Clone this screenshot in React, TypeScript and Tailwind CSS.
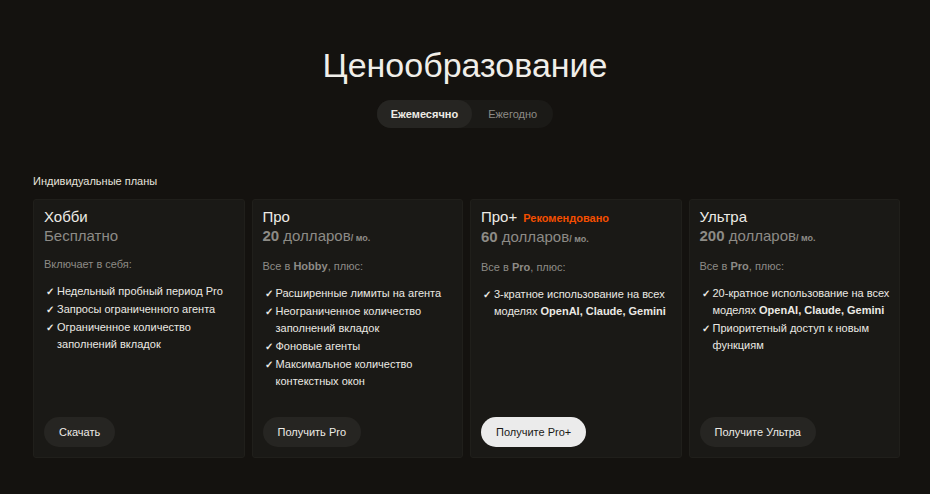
import React from "react";

type Plan = {
  name: string;
  badge?: string;
  price: React.ReactNode;
  intro: React.ReactNode;
  features: React.ReactNode[];
  cta: string;
  primary?: boolean;
};

const plans: Plan[] = [
  {
    name: "Хобби",
    price: <span>Бесплатно</span>,
    intro: "Включает в себя:",
    features: [
      "Недельный пробный период Pro",
      "Запросы ограниченного агента",
      "Ограниченное количество заполнений вкладок",
    ],
    cta: "Скачать",
  },
  {
    name: "Про",
    price: (
      <>
        <span className="font-bold">20</span> долларов
        <span className="text-[9px] font-bold">/ мо.</span>
      </>
    ),
    intro: (
      <>
        Все в <span className="font-bold">Hobby</span>, плюс:
      </>
    ),
    features: [
      "Расширенные лимиты на агента",
      "Неограниченное количество заполнений вкладок",
      "Фоновые агенты",
      "Максимальное количество контекстных окон",
    ],
    cta: "Получить Pro",
  },
  {
    name: "Про+",
    badge: "Рекомендовано",
    price: (
      <>
        <span className="font-bold">60</span> долларов
        <span className="text-[9px] font-bold">/ мо.</span>
      </>
    ),
    intro: (
      <>
        Все в <span className="font-bold">Pro</span>, плюс:
      </>
    ),
    features: [
      <>
        3-кратное использование на всех моделях <b>OpenAI, Claude, Gemini</b>
      </>,
    ],
    cta: "Получите Pro+",
    primary: true,
  },
  {
    name: "Ультра",
    price: (
      <>
        <span className="font-bold">200</span> долларов
        <span className="text-[9px] font-bold">/ мо.</span>
      </>
    ),
    intro: (
      <>
        Все в <span className="font-bold">Pro</span>, плюс:
      </>
    ),
    features: [
      <>
        20-кратное использование на всех моделях <b>OpenAI, Claude, Gemini</b>
      </>,
      "Приоритетный доступ к новым функциям",
    ],
    cta: "Получите Ультра",
  },
];

function PlanCard({ plan }: { plan: Plan }) {
  return (
    <div className="flex h-[259px] flex-col rounded-[3px] border border-[#201f1b] bg-[#1a1916] pl-[10px] pr-[6px] pt-[7px] pb-[10px]">
      <div className="flex items-baseline text-[15px] leading-[20px] text-[#edebe6]">
        {plan.name}
        {plan.badge && (
          <span className="ml-[6px] text-[11px] font-bold text-[#f54e00]">{plan.badge}</span>
        )}
      </div>
      <div className="text-[15px] leading-[18px] text-[#8d8b86]">{plan.price}</div>
      <div className="mt-[11px] text-[11px] leading-[16px] text-[#8d8b86]">{plan.intro}</div>
      <ul className="mt-[11px] ml-[2px] flex flex-col gap-px">
        {plan.features.map((f, i) => (
          <li key={i} className="flex text-[11px] leading-[17px] text-[#ebe9e4]">
            <span className="w-[11px] shrink-0 text-[10px] font-bold">✓</span>
            <span>{f}</span>
          </li>
        ))}
      </ul>
      <div className="mt-auto">
        <button
          className={
            plan.primary
              ? "h-[30px] rounded-full bg-[#ebebeb] px-[15px] text-[11px] text-[#1a1916]"
              : "h-[30px] rounded-full bg-[#262522] px-[15px] text-[11px] text-[#edebe6]"
          }
        >
          {plan.cta}
        </button>
      </div>
    </div>
  );
}

export default function App() {
  return (
    <div
      className="min-h-screen bg-[#14120f] pt-[43px]"
      style={{ fontFamily: '"Liberation Sans", Arial, sans-serif' }}
    >
      <h1 className="text-center text-[34px] leading-[44px] text-[#f0eee9]">Ценообразование</h1>
      <div className="mt-[13px] flex justify-center">
        <div className="flex h-[28px] rounded-full bg-[#1b1a17] text-[11px]">
          <button className="rounded-full bg-[#262522] px-[14px] font-bold text-[#edebe6]">
            Ежемесячно
          </button>
          <button className="px-[16px] text-[#8d8b86]">Ежегодно</button>
        </div>
      </div>
      <div className="mt-[45px] ml-[33px] w-[867px]">
        <h2 className="text-[11px] leading-[16px] text-[#e6e3dc]">Индивидуальные планы</h2>
        <div className="mt-[10px] grid grid-cols-4 gap-[7px]">
          {plans.map((p) => (
            <PlanCard key={p.name} plan={p} />
          ))}
        </div>
      </div>
    </div>
  );
}
